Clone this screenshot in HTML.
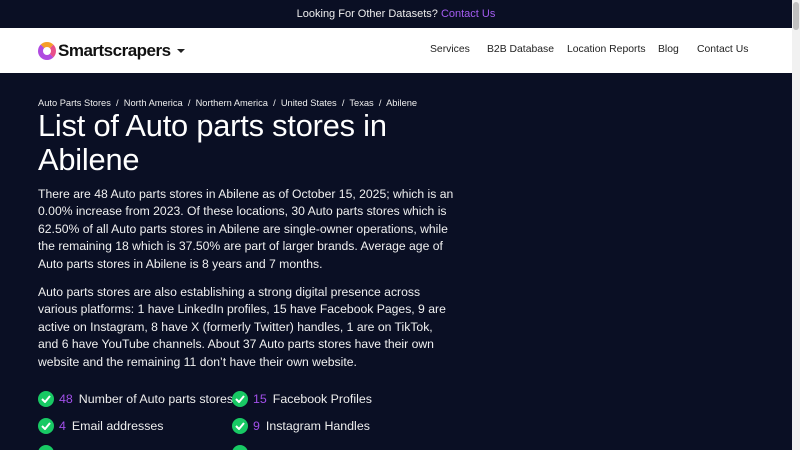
<!DOCTYPE html>
<html><head><style>
*{margin:0;padding:0;box-sizing:border-box}
html,body{width:800px;height:450px;overflow:hidden}
body{background:#0a0f24;font-family:"Liberation Sans",sans-serif;color:#fff;position:relative}
.sb{position:absolute;right:0;top:0;width:8px;height:450px;background:#f1f1f1}
.sb i{position:absolute;left:1px;top:2px;width:6px;height:28px;background:#c1c1c1;border-radius:3px}
.top{height:28px;background:#0a0f24;text-align:center;font-size:11px;line-height:28px;width:792px;color:#eee}
.top a{color:#a35cf0}
.nav{position:absolute;top:28px;left:0;width:792px;height:45px;background:#fff;color:#111}
.logo{position:absolute;left:38px;top:13px;display:flex;align-items:center;font-weight:bold;font-size:17px;letter-spacing:-0.5px}
.logo .c{width:18px;height:18px;border-radius:50%;border:5px solid #b04ae0;border-top-color:#f59f2a;border-right-color:#e8508a;margin-right:2px}
.logo .ar{margin-left:6px;border:4px solid transparent;border-top:4px solid #222;margin-top:4px}
.links{position:absolute;top:16px;font-size:10.4px;color:#222}
.links span{position:absolute;white-space:nowrap}
.bc{position:absolute;left:38px;top:98px;font-size:9.3px;color:#eee;white-space:nowrap}
h1{position:absolute;left:38px;top:109px;font-weight:normal;font-size:30.8px;line-height:34px;width:430px;letter-spacing:-0.2px}
p{position:absolute;left:38px;width:420px;font-size:12.2px;line-height:17.4px;color:#f0f0f0}
.st{position:absolute;font-size:12.4px;color:#eee;white-space:nowrap;display:flex;align-items:center}
.st b{font-weight:normal;color:#a14fe8;margin:0 6px 0 5px}
.ck{width:16px;height:16px;border-radius:50%;background:#18c964;display:inline-flex;align-items:center;justify-content:center}
</style></head><body>
<div class="top">Looking For Other Datasets? <a>Contact Us</a></div>
<div class="nav">
<div class="logo"><span class="c"></span>Smartscrapers<span class="ar"></span></div>
<div class="links"><span style="left:430px">Services</span><span style="left:487px">B2B Database</span><span style="left:567px">Location Reports</span><span style="left:658px">Blog</span><span style="left:697px">Contact Us</span></div>
</div>
<div class="bc">Auto Parts Stores &nbsp;/&nbsp; North America &nbsp;/&nbsp; Northern America &nbsp;/&nbsp; United States &nbsp;/&nbsp; Texas &nbsp;/&nbsp; Abilene</div>
<h1>List of Auto parts stores in Abilene</h1>
<p style="top:186px">There are 48 Auto parts stores in Abilene as of October 15, 2025; which is an 0.00% increase from 2023. Of these locations, 30 Auto parts stores which is 62.50% of all Auto parts stores in Abilene are single-owner operations, while the remaining 18 which is 37.50% are part of larger brands. Average age of Auto parts stores in Abilene is 8 years and 7 months.</p>
<p style="top:284px;width:412px">Auto parts stores are also establishing a strong digital presence across various platforms: 1 have LinkedIn profiles, 15 have Facebook Pages, 9 are active on Instagram, 8 have X (formerly Twitter) handles, 1 are on TikTok,<br>and 6 have YouTube channels. About 37 Auto parts stores have their own website and the remaining 11 don’t have their own website.</p>
<div class="st" style="left:38px;top:391px"><span class="ck"><svg width="10" height="8"><path d="M1 4l3 3 5-6" stroke="#fff" stroke-width="2" fill="none"/></svg></span><b>48</b>Number of Auto parts stores</div>
<div class="st" style="left:232px;top:391px"><span class="ck"><svg width="10" height="8"><path d="M1 4l3 3 5-6" stroke="#fff" stroke-width="2" fill="none"/></svg></span><b>15</b>Facebook Profiles</div>
<div class="st" style="left:38px;top:418px"><span class="ck"><svg width="10" height="8"><path d="M1 4l3 3 5-6" stroke="#fff" stroke-width="2" fill="none"/></svg></span><b>4</b>Email addresses</div>
<div class="st" style="left:232px;top:418px"><span class="ck"><svg width="10" height="8"><path d="M1 4l3 3 5-6" stroke="#fff" stroke-width="2" fill="none"/></svg></span><b>9</b>Instagram Handles</div>
<div class="st" style="left:38px;top:445px"><span class="ck"></span></div>
<div class="st" style="left:232px;top:445px"><span class="ck"></span></div>
<div class="sb"><i></i></div>
</body></html>
